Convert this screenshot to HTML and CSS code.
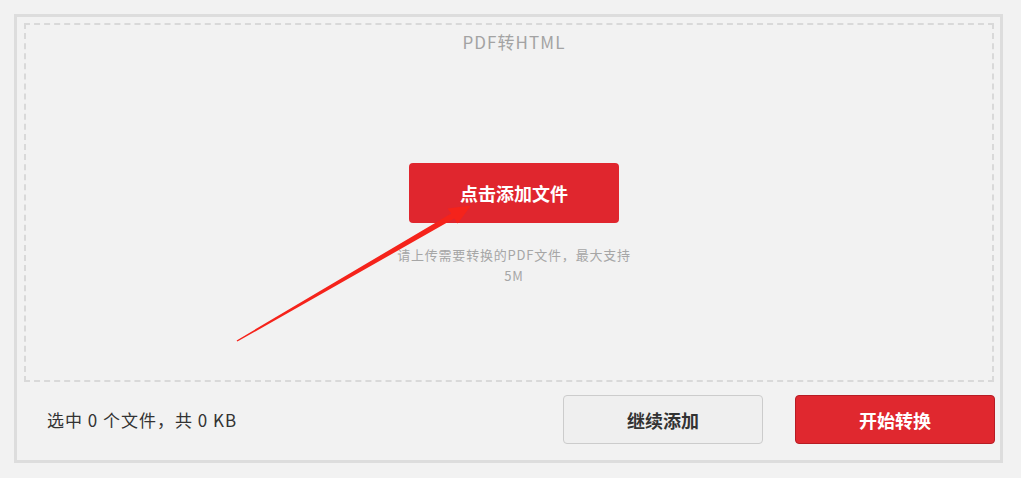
FILE: index.html
```html
<!DOCTYPE html>
<html lang="zh-CN">
<head>
<meta charset="utf-8">
<title>PDF转HTML</title>
<link rel="stylesheet" href="styles.css">
</head>
<body>
<div class="panel">
  <div class="drop">
    <div class="title">PDF转HTML</div>
    <div class="center">
      <button class="btn-add">点击添加文件</button>
      <p class="hint">请上传需要转换的PDF文件，最大支持5M</p>
    </div>
    <svg class="arrow" viewBox="0 0 966 355" width="966" height="355">
      <polygon points="210.6,315.4 425.2,188.4 421.7,183.4 445,180.6 431.7,198.6 428.2,193.6 211.4,316.6" fill="#f5231b"/>
    </svg>
  </div>
  <div class="footer">
    <div class="summary">选中 0 个文件，共 0 KB</div>
    <div class="actions">
      <button class="btn btn-more">继续添加</button>
      <button class="btn btn-start">开始转换</button>
    </div>
  </div>
</div>
</body>
</html>
```
FILE: styles.css
```css
html, body {
  margin: 0;
  padding: 0;
  background: #f2f2f2;
}
body {
  font-family: "Noto Sans CJK SC", "Open Sans", sans-serif;
  width: 1021px;
  height: 478px;
  overflow: hidden;
}
.panel {
  box-sizing: border-box;
  margin: 14px 0 0 14px;
  width: 989px;
  height: 449px;
  border: 3px solid #dddddd;
  padding: 6px 6px 0 7px;
  display: flex;
  flex-direction: column;
}
.drop {
  position: relative;
  box-sizing: border-box;
  height: 359px;
  border: 2px dashed #d9d9d9;
  padding-left: 10px;
  display: flex;
  flex-direction: column;
  align-items: center;
}
.title {
  margin-top: 6px;
  font-size: 17px;
  line-height: 22px;
  letter-spacing: 1.1px;
  color: #a3a3a3;
}
.center {
  margin-top: 110px;
  display: flex;
  flex-direction: column;
  align-items: center;
}
.btn-add {
  width: 210px;
  height: 60px;
  border: none;
  border-radius: 4px;
  background: #e0262e;
  color: #ffffff;
  font-family: inherit;
  font-size: 18px;
  font-weight: 700;
  padding: 0;
  cursor: pointer;
}
.hint {
  margin: 21px 0 0;
  width: 244px;
  font-size: 13px;
  line-height: 21px;
  letter-spacing: 0.8px;
  color: #a6a6a6;
  text-align: center;
}
.arrow {
  position: absolute;
  left: 0;
  top: 0;
  pointer-events: none;
}
.footer {
  flex: 1;
  display: flex;
  align-items: center;
  justify-content: space-between;
  padding-left: 23px;
  padding-bottom: 3px;
  margin-right: -1px;
}
.summary {
  font-size: 17px;
  letter-spacing: 1px;
  color: #333333;
}
.actions {
  display: flex;
  gap: 32px;
}
.btn {
  box-sizing: border-box;
  width: 200px;
  height: 49px;
  border-radius: 4px;
  font-family: inherit;
  font-size: 18px;
  font-weight: 700;
  padding: 0;
  cursor: pointer;
}
.btn-more {
  background: #efefef;
  border: 1px solid #cccccc;
  color: #333333;
}
.btn-start {
  background: #e0282f;
  border: 1px solid #b71c24;
  color: #ffffff;
}
```
